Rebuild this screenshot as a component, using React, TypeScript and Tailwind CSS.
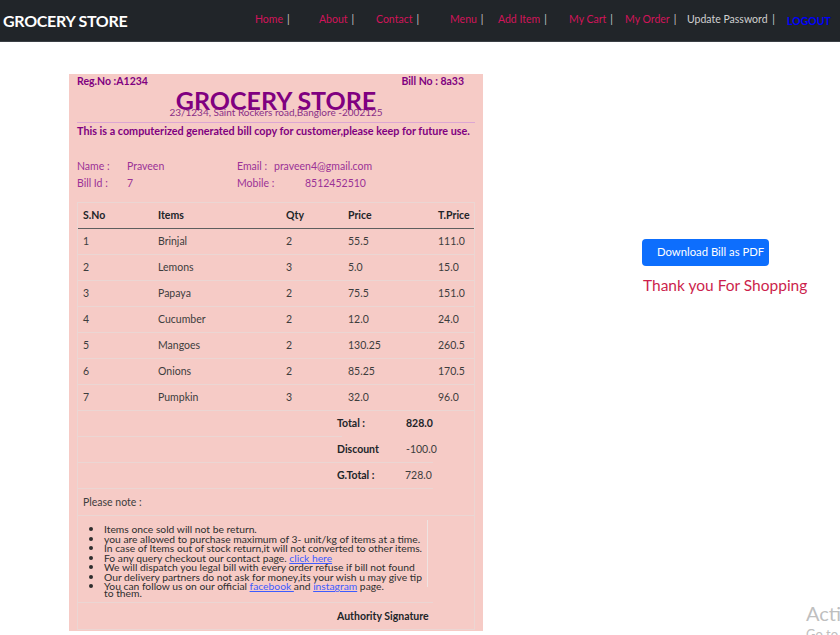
const navLinks = [
  { label: "Home", w: "w-[64px]" },
  { label: "About", w: "w-[57px]" },
  { label: "Contact", w: "w-[74px]" },
  { label: "Menu", w: "w-[48px]" },
  { label: "Add Item", w: "w-[71px]" },
  { label: "My Cart", w: "w-[56px]" },
  { label: "My Order", w: "w-[62px]" },
];

const items = [
  { sno: 1, name: "Brinjal", qty: 2, price: "55.5", total: "111.0" },
  { sno: 2, name: "Lemons", qty: 3, price: "5.0", total: "15.0" },
  { sno: 3, name: "Papaya", qty: 2, price: "75.5", total: "151.0" },
  { sno: 4, name: "Cucumber", qty: 2, price: "12.0", total: "24.0" },
  { sno: 5, name: "Mangoes", qty: 2, price: "130.25", total: "260.5" },
  { sno: 6, name: "Onions", qty: 2, price: "85.25", total: "170.5" },
  { sno: 7, name: "Pumpkin", qty: 3, price: "32.0", total: "96.0" },
];

function Navbar() {
  return (
    <nav className="flex h-[42px] items-center whitespace-nowrap bg-[#212529] border-b border-[#3b3f45]">
      <span className="ml-[3px] w-[252px] shrink-0 text-[16px] font-bold tracking-[-0.3px] text-white">GROCERY STORE</span>
      <ul className="flex items-center text-[10.5px] -mt-[1px]">
        {navLinks.map((l) => (
          <li key={l.label} className={`${l.w} shrink-0`}>
            <span className="text-[#d2145a]">{l.label}</span>
            <span className="ml-[4px] text-[#c8c8c8]">|</span>
          </li>
        ))}
        <li className="w-[100px] shrink-0 text-[#d0d0d0]">
          Update Password <span className="ml-[2px]">|</span>
        </li>
        <li className="mt-[3px] shrink-0 text-[10.5px] font-bold text-[#0000ff]">LOGOUT</li>
      </ul>
    </nav>
  );
}

function BillCard() {
  return (
    <section className="w-[414px] bg-[#f6cbc6] px-[8px] pb-[1px]">
      <div className="flex h-[16px] items-end justify-between pr-[11px] text-[10.5px] font-bold text-[#800080]">
        <span>Reg.No :A1234</span>
        <span>Bill No : 8a33</span>
      </div>
      <div className="h-[20px] text-center text-[25px] font-bold leading-[20px] text-[#800080]">
        GROCERY STORE
      </div>
      <div className="-mt-[4px] h-[12px] text-center text-[10px] leading-[12px] text-[#8a2f86]">
        23/1234, Saint Rockers road,Banglore -2002125
      </div>
      <div className="mt-[4px] border-t border-[#dca6d3]" />
      <div className="h-[16px] whitespace-nowrap text-[10.8px] font-bold leading-[16px] text-[#800080]">
        This is a computerized generated bill copy for customer,please keep for future use.
      </div>

      <div className="mt-[19px] text-[10.5px] text-[#9b3296]">
        <div className="flex h-[17px] items-center">
          <span className="w-[50px]">Name :</span>
          <span className="w-[110px]">Praveen</span>
          <span className="w-[37px]">Email :</span>
          <span>praveen4@gmail.com</span>
        </div>
        <div className="flex h-[17px] items-center">
          <span className="w-[50px]">Bill Id :</span>
          <span className="w-[110px]">7</span>
          <span className="w-[68px]">Mobile :</span>
          <span>8512452510</span>
        </div>
      </div>

      <div className="mt-[10px] border border-[#ebd6d3] text-[10.5px] text-[#3d3d3d]">
        <div className="flex h-[26px] items-center border-b border-[#5e5e5e] font-bold text-[#212529]">
          <span className="w-[75px] pl-[5px]">S.No</span>
          <span className="w-[128px] pl-[5px]">Items</span>
          <span className="w-[62px] pl-[5px]">Qty</span>
          <span className="w-[90px] pl-[5px]">Price</span>
          <span className="pl-[5px]">T.Price</span>
        </div>
        {items.map((it) => (
          <div key={it.sno} className="flex h-[26px] items-center border-b border-[#ebd6d3]">
            <span className="w-[75px] pl-[5px]">{it.sno}</span>
            <span className="w-[128px] pl-[5px]">{it.name}</span>
            <span className="w-[62px] pl-[5px]">{it.qty}</span>
            <span className="w-[90px] pl-[5px]">{it.price}</span>
            <span className="pl-[5px]">{it.total}</span>
          </div>
        ))}

        <div className="flex h-[26px] w-[264px] items-center whitespace-nowrap border-b border-[#ebd6d3] pt-[1px]">
          <span className="ml-[259px] w-[69px] shrink-0 font-bold text-[#212529]">Total :</span>
          <span className="shrink-0 font-bold text-[#212529]">828.0</span>
        </div>
        <div className="flex h-[26px] w-[355px] items-center whitespace-nowrap border-b border-[#ebd6d3] pt-[1px]">
          <span className="ml-[259px] w-[69px] shrink-0 font-bold text-[#212529]">Discount</span>
          <span>-100.0</span>
        </div>
        <div className="flex h-[26px] w-[355px] items-center whitespace-nowrap border-b border-[#ebd6d3] pt-[1px]">
          <span className="ml-[259px] w-[68px] shrink-0 font-bold text-[#212529]">G.Total :</span>
          <span>728.0</span>
        </div>
        <div className="flex h-[27px] items-center border-b border-[#ebd6d3] pl-[5px] pt-[2px]">Please note :</div>

        <div className="h-[87px] w-[355px] border-b border-[#ebd6d3] pt-[4px]">
          <div className="h-[67px] w-[350px] border-r border-[#efe3e1]">
            <ul className="list-disc pl-[26px] text-[10.3px] text-[#2e2e2e] whitespace-nowrap marker:text-[13px]">
              <li className="h-[9.5px] leading-[16px]">Items once sold will not be return.</li>
              <li className="h-[9.5px] leading-[16px]">you are allowed to purchase maximum of 3- unit/kg of items at a time.</li>
              <li className="h-[9.5px] leading-[16px]">In case of Items out of stock return,it will not converted to other items.</li>
              <li className="h-[9.5px] leading-[16px]">
                Fo any query checkout our contact page. <a className="text-[#3d5cff] underline">click here</a>
              </li>
              <li className="h-[9.5px] leading-[16px]">We will dispatch you legal bill with every order refuse if bill not found</li>
              <li className="h-[9.5px] leading-[16px]">
                Our delivery partners do not ask for money,its your wish u may give tip
                <br />
                to them.
              </li>
              <li className="h-[9.5px] leading-[16px]">
                You can follow us on our official <a className="text-[#3d5cff] underline">facebook </a>and{" "}
                <a className="text-[#3d5cff] underline">instagram</a> page.
              </li>
            </ul>
          </div>
        </div>
        <div className="flex h-[26px] items-center pt-[1px]">
          <span className="ml-[259px] font-bold text-[#212529]">Authority Signature</span>
        </div>
      </div>
    </section>
  );
}

export default function App() {
  return (
    <div className="relative h-[635px] w-[840px] overflow-hidden bg-white font-['Lato',sans-serif]">
      <Navbar />
      <main className="flex">
        <div className="ml-[69px] mt-[32px]">
          <BillCard />
        </div>
        <div className="ml-[159px] mt-[197px] flex flex-col items-start">
          <button className="h-[27px] w-[127px] rounded-[4px] bg-[#0d6efd] pl-[15px] text-left text-[11.3px] text-white">
            Download Bill as PDF
          </button>
          <p className="mt-[8px] ml-[1px] text-[15.5px] text-[#cc1f4d]">Thank you For Shopping</p>
        </div>
      </main>
      <div className="absolute left-[806px] top-[600px] whitespace-nowrap text-[20px] leading-[26px] text-[#bfbfbf]">
        Activate Windows
        <div className="text-[13px] leading-[16px]">Go to Settings to activate Windows.</div>
      </div>
    </div>
  );
}
